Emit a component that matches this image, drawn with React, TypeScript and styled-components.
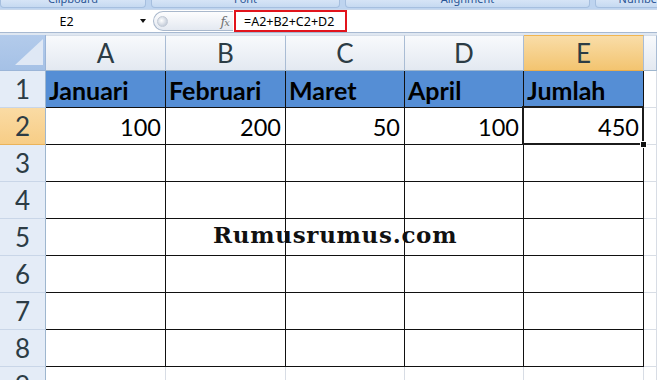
import { Fragment } from "react";
import styled, { createGlobalStyle } from "styled-components";

const GlobalStyle = createGlobalStyle`
  html, body { margin: 0; padding: 0; background: #ffffff; }
  body { font-family: Lato, "Open Sans", sans-serif; }
`;

const Screen = styled.div`
  width: 657px;
  height: 380px;
  overflow: hidden;
  display: flex;
  flex-direction: column;
  background: #ffffff;
`;

const Ribbon = styled.div`
  height: 9px;
  flex: none;
  display: flex;
  gap: 5px;
  background: #bed4ef;
  overflow: hidden;
`;

const RibbonGroup = styled.div<{ $w: number }>`
  width: ${p => p.$w}px;
  flex: none;
  box-sizing: border-box;
  height: 8px;
  background: linear-gradient(#d6e4f6, #c6daf1);
  border: 1px solid #a6bfdf;
  border-top: none;
  border-radius: 0 0 4px 4px;
  overflow: hidden;
  display: flex;
  justify-content: center;
  align-items: flex-start;
`;

const RibbonLabel = styled.span`
  font: 11px/11px "Noto Sans", sans-serif;
  color: #2a5595;
  margin-top: -7px;
  white-space: nowrap;
`;

const FormulaBar = styled.div`
  height: 24px;
  flex: none;
  box-sizing: border-box;
  display: flex;
  align-items: center;
  background: #ffffff;
  border-top: 1px solid #c9d8eb;
  border-bottom: 1px solid #a7b9d1;
`;

const NameBox = styled.div`
  width: 150px;
  flex: none;
  display: flex;
  align-items: center;
`;

const NameText = styled.span`
  width: 133px;
  text-align: center;
  font: 12.5px "Noto Sans", sans-serif;
  color: #000;
`;

const DropArrow = styled.span`
  width: 0;
  height: 0;
  margin-left: 7px;
  border-left: 3.5px solid transparent;
  border-right: 3.5px solid transparent;
  border-top: 4px solid #111;
`;

const FxPanel = styled.div`
  margin-left: 3px;
  width: 80px;
  height: 20px;
  box-sizing: border-box;
  flex: none;
  display: flex;
  align-items: center;
  justify-content: space-between;
  padding: 0 4px 0 3px;
  background: linear-gradient(#fdfdfe, #e4e9f1);
  border: 1px solid #a9b8cc;
  border-right: none;
  border-radius: 11px 0 0 11px;
`;

const Grip = styled.span`
  width: 9px;
  height: 9px;
  border-radius: 50%;
  background: radial-gradient(circle at 40% 40%, #ffffff, #c8d0dc 70%);
  border: 1px solid #c2cad6;
`;

const FxLabel = styled.span`
  font: italic 13px "DejaVu Serif", serif;
  color: #707070;
  letter-spacing: -1px;
  & small { font-size: 10px; }
`;

const FormulaBox = styled.div`
  margin-left: 1px;
  height: 22px;
  width: 113px;
  box-sizing: border-box;
  border: 2px solid #e2141c;
  display: flex;
  align-items: center;
  padding-left: 8px;
  font: 12.5px "Noto Sans", sans-serif;
  color: #000;
`;

const Spacer = styled.div`
  height: 2px;
  flex: none;
  background: #dfe7f1;
`;

const Sheet = styled.div`
  position: relative;
  display: grid;
  grid-template-columns: 46px 120px 120px 119px 119px 120px 1fr;
  grid-template-rows: 36px repeat(9, 37px);
`;

const Corner = styled.div`
  box-sizing: border-box;
  background: linear-gradient(#b3cbeb, #a5c1e6);
  border-right: 1px solid #9bb5d8;
  border-bottom: 1px solid #9bb5d8;
  display: flex;
`;

const ColHead = styled.div<{ $active?: boolean }>`
  box-sizing: border-box;
  display: flex;
  align-items: center;
  justify-content: center;
  font-size: 26px;
  color: #2c3c45;
  background: ${p => p.$active
    ? "linear-gradient(#f9dda8, #f3c470)"
    : "linear-gradient(#f8fafc, #e3e9f1)"};
  border-top: 1px solid ${p => (p.$active ? "#f0b550" : "#d5dde8")};
  border-right: 1px solid #a9bcd4;
  border-bottom: 1px solid ${p => (p.$active ? "#e9ad4c" : "#9eb6ce")};
`;

const RowHead = styled.div<{ $active?: boolean }>`
  box-sizing: border-box;
  display: flex;
  align-items: center;
  justify-content: center;
  font-size: 26px;
  color: #2c3c45;
  background: ${p => (p.$active ? "linear-gradient(#fadba4, #f7cd86)" : "#e4ecf7")};
  border-right: 1px solid #9eb6ce;
  border-bottom: 1px solid ${p => (p.$active ? "#eab35a" : "#c9d6e8")};
`;

const Cell = styled.div<{ $head?: boolean; $num?: boolean; $inTable?: boolean; $selected?: boolean }>`
  position: relative;
  box-sizing: border-box;
  display: flex;
  align-items: center;
  justify-content: ${p => (p.$num ? "flex-end" : "flex-start")};
  padding: ${p => (p.$num ? "2px 4px 0 0" : "1px 0 0 3px")};
  font-size: ${p => (p.$head ? "25px" : "23.5px")};
  font-weight: ${p => (p.$head ? 700 : 400)};
  color: #000;
  background: ${p => (p.$head ? "#558ed5" : "#ffffff")};
  border-right: 1px solid ${p => (p.$inTable ? "#111" : "#d8dde5")};
  border-bottom: 1px solid ${p => (p.$inTable ? "#111" : "#d8dde5")};

  ${p => p.$selected && `
    &::after {
      content: "";
      position: absolute;
      inset: -2px -1px -1px -2px;
      border: 2px solid #1b1b1b;
    }
    &::before {
      content: "";
      position: absolute;
      right: -4px;
      bottom: -4px;
      width: 5px;
      height: 5px;
      background: #111;
      border: 1px solid #fff;
      z-index: 1;
    }
  `}
`;

const Watermark = styled.div`
  position: absolute;
  left: 213px;
  top: 186px;
  font: bold 23px "DejaVu Serif", serif;
  color: #111;
  letter-spacing: 0.7px;
  pointer-events: none;
`;

const columns = ["A", "B", "C", "D", "E"];
const headers = ["Januari", "Februari", "Maret", "April", "Jumlah"];
const values = ["100", "200", "50", "100", "450"];
const rows = [1, 2, 3, 4, 5, 6, 7, 8, 9];

function App() {
  return (
    <Screen>
      <GlobalStyle />
      <Ribbon>
        <RibbonGroup $w={146}><RibbonLabel>Clipboard</RibbonLabel></RibbonGroup>
        <RibbonGroup $w={189}><RibbonLabel>Font</RibbonLabel></RibbonGroup>
        <RibbonGroup $w={245}><RibbonLabel>Alignment</RibbonLabel></RibbonGroup>
        <RibbonGroup $w={90}><RibbonLabel>Number</RibbonLabel></RibbonGroup>
      </Ribbon>

      <FormulaBar>
        <NameBox>
          <NameText>E2</NameText>
          <DropArrow />
        </NameBox>
        <FxPanel>
          <Grip />
          <FxLabel>f<small>x</small></FxLabel>
        </FxPanel>
        <FormulaBox>=A2+B2+C2+D2</FormulaBox>
      </FormulaBar>
      <Spacer />

      <Sheet>
        <Corner>
          <svg width="45" height="35" viewBox="0 0 45 35">
            <polygon points="15,30 43,30 43,4" fill="#dfe8f5" />
          </svg>
        </Corner>
        {columns.map(c => (
          <ColHead key={c} $active={c === "E"}>{c}</ColHead>
        ))}
        <ColHead />

        {rows.map(r => (
          <Fragment key={r}>
            <RowHead $active={r === 2}>{r}</RowHead>
            {columns.map((c, i) => (
              <Cell
                key={c}
                $head={r === 1}
                $num={r === 2}
                $inTable={r <= 8}
                $selected={r === 2 && c === "E"}
              >
                {r === 1 ? headers[i] : r === 2 ? values[i] : null}
              </Cell>
            ))}
            <Cell />
          </Fragment>
        ))}

        <Watermark>Rumusrumus.com</Watermark>
      </Sheet>
    </Screen>
  );
}

export default App;
